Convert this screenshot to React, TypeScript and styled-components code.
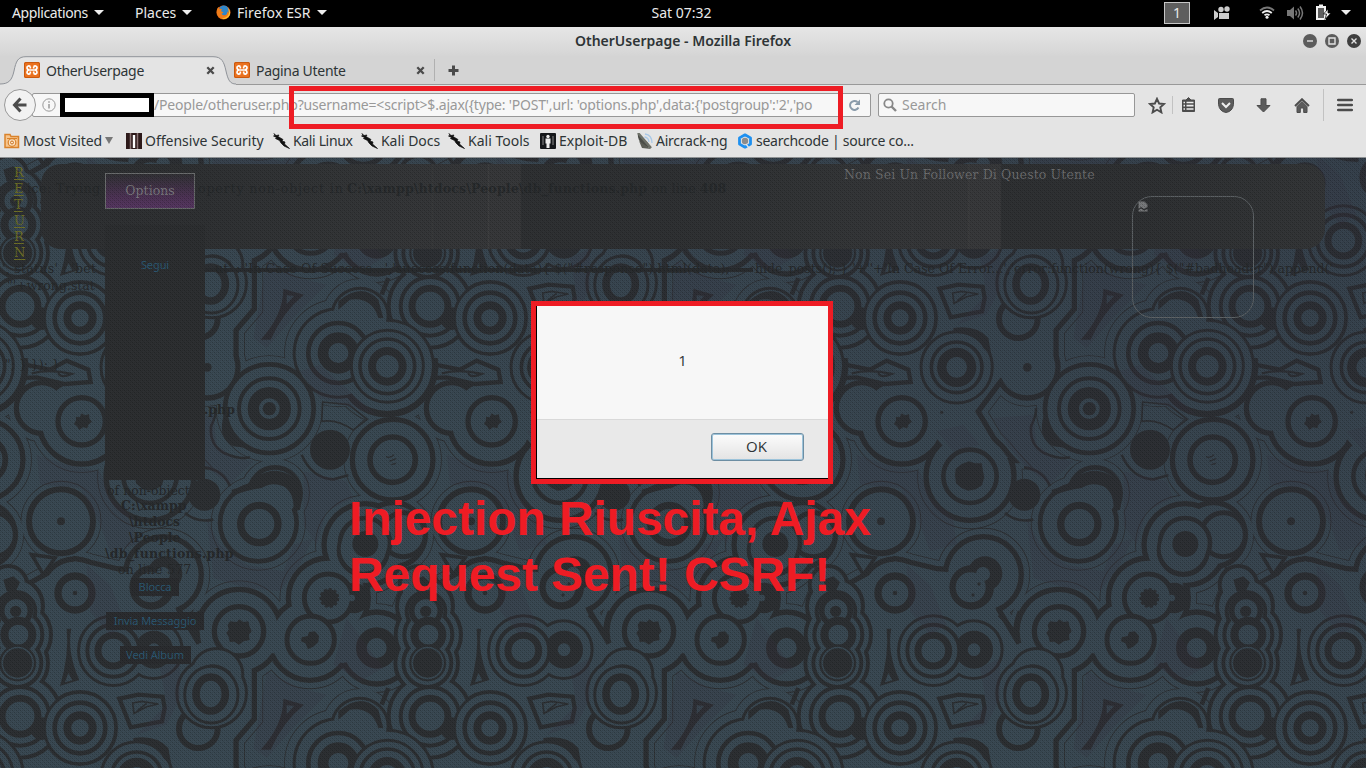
import React from "react";
import styled, { createGlobalStyle } from "styled-components";

const ui = `"Noto Sans", "Open Sans", sans-serif`;
const slab = `"DejaVu Serif", "Liberation Serif", serif`;
const RED = "#ee1c24";
const BLUE = "#3a4953";
const DARK = "#2d3033";

const Global = createGlobalStyle`
  * { box-sizing: border-box; }
  body { margin: 0; background: #2d3338; overflow: hidden; }
  svg { display: block; flex: none; }
`;

const Screen = styled.div`
  position: relative;
  width: 1366px;
  height: 768px;
  overflow: hidden;
  display: flex;
  flex-direction: column;
  font-family: ${ui};
  font-size: 14px;
  color: #2e3436;
`;

const Label = styled.span<{ $ls?: number }>`
  white-space: pre;
  flex: none;
  letter-spacing: ${(p) => p.$ls ?? 0}px;
`;

/* ---------- desktop panel ---------- */
const Panel = styled.div`
  height: 27px;
  background: #000;
  color: #eaeaea;
  display: grid;
  grid-template-columns: 1fr auto 1fr;
  align-items: center;
  padding: 0 15px 2px 12px;
`;
const PanelMenus = styled.div`
  display: flex;
  align-items: center;
`;
const PanelMenu = styled.div<{ $w: number }>`
  display: flex;
  align-items: center;
  width: ${(p) => p.$w}px;
  gap: 6px;
`;
const PanelStatus = styled.div`
  display: flex;
  align-items: center;
  justify-content: flex-end;
`;
const Caret = styled.i`
  border: 5px solid transparent;
  border-top-color: #eee;
  border-bottom: 0;
`;
const Workspace = styled.div`
  width: 26px;
  height: 22px;
  border: 1px solid #c6c6c6;
  background: #5e5e5e;
  display: flex;
  align-items: center;
  justify-content: center;
  margin-right: 24px;
  padding-bottom: 1px;
`;

/* ---------- browser window ---------- */
const TitleBar = styled.div`
  height: 29px;
  background: linear-gradient(#e6e6e6, #d5d5d5);
  display: grid;
  grid-template-columns: 1fr auto 1fr;
  align-items: center;
  padding: 0 5px 1px;
  font-weight: 600;
  > ${Label} { margin-top: -2px; }
`;
const WinButtons = styled.div`
  display: flex;
  justify-content: flex-end;
  gap: 8px;
`;
const TabStrip = styled.div`
  height: 29px;
  background: #d4d4d4;
  position: relative;
  display: flex;
  align-items: center;
  border-bottom: 1px solid #999;
  padding-left: 24px;
`;
const TabShape = styled.svg`
  position: absolute;
  left: 0;
  top: 0;
`;
const Tab = styled.div<{ $w: number; $pad?: number }>`
  position: relative;
  display: flex;
  align-items: center;
  gap: 6px;
  width: ${(p) => p.$w}px;
  padding-left: ${(p) => p.$pad ?? 0}px;
`;
const TabTitle = styled.span`
  flex: 1;
  letter-spacing: -0.3px;
`;
const TabDivider = styled.i`
  width: 1px;
  height: 22px;
  background: #b0b0b0;
  margin: 0 13px 0 9px;
`;
const NavRow = styled.div`
  height: 40px;
  background: #e4e4e4;
  display: flex;
  align-items: center;
  padding-left: 4px;
`;
const Back = styled.div`
  width: 32px;
  height: 32px;
  border-radius: 50%;
  border: 1px solid #999;
  background: #f2f2f2;
  display: flex;
  align-items: center;
  justify-content: center;
  z-index: 1;
`;
const Field = styled.div<{ $w: number; $joined?: boolean }>`
  height: 24px;
  width: ${(p) => p.$w}px;
  margin-left: ${(p) => (p.$joined ? -4 : 7)}px;
  border: 1px solid #979797;
  border-radius: 2px;
  background: #f7f7f7;
  display: flex;
  align-items: center;
  color: #999;
  ${Label} { margin-top: -2px; }
`;
const Redacted = styled.div`
  width: 94px;
  height: 24px;
  border: 5px solid #000;
  background: #fff;
  margin-left: 4px;
  flex: none;
`;
const Reload = styled.div`
  margin-left: auto;
  width: 32px;
  height: 22px;
  border-left: 1px solid #ccc;
  display: flex;
  align-items: center;
  justify-content: center;
`;
const Tools = styled.div`
  display: flex;
  align-items: center;
  flex: 1;
  padding-left: 13px;
`;
const ToolSep = styled.i<{ $h: number; $l: number; $r: number }>`
  width: 1px;
  height: ${(p) => p.$h}px;
  background: #c2c2c2;
  margin: 0 ${(p) => p.$r}px 0 ${(p) => p.$l}px;
`;
const Bookmarks = styled.div`
  height: 33px;
  background: #e4e4e4;
  border-bottom: 1px solid #8e9193;
  display: flex;
  align-items: center;
  padding: 0 0 1px 4px;
`;
const Bookmark = styled.div<{ $w: number }>`
  display: flex;
  align-items: center;
  gap: 3px;
  width: ${(p) => p.$w}px;
`;
const Down = styled.i`
  border: 4px solid transparent;
  border-top: 7px solid #777;
  border-bottom: 0;
`;

/* ---------- page ---------- */
const Page = styled.div`
  position: relative;
  flex: 1;
  overflow: hidden;
  background: ${BLUE};
  font-family: ${slab};
`;
const Layer = styled.svg`
  position: absolute;
  inset: 0;
`;
const Header = styled.div`
  position: absolute;
  left: 41px;
  right: 41px;
  top: 6px;
  height: 85px;
  border-radius: 20px;
  background:
    linear-gradient(90deg, transparent 391px, #3a3b3c 391px, #3a3b3c 392px, transparent 392px, transparent 447px, #404142 447px, #404142 448px, #37383a 448px, #37383a 480px, transparent 480px, transparent 871px, #38393b 871px, #38393b 872px, transparent 872px, transparent 927px, #3e3f40 927px, #38393b 929px, #38393b 960px, transparent 960px),
    repeating-linear-gradient(90deg, #2f3133 0, #2f3133 150px, #343638 340px, #37383a 480px);
`;
const Sidebar = styled.div`
  position: absolute;
  left: 105px;
  top: 67px;
  width: 100px;
  height: 255px;
  background: #2d2f31;
`;
const Trace = styled.div<{ $x: number; $y: number; $ls?: number; $bold?: boolean }>`
  position: absolute;
  left: ${(p) => p.$x}px;
  top: ${(p) => p.$y - 7}px;
  line-height: 16px;
  font-size: 12.5px;
  letter-spacing: ${(p) => p.$ls ?? 0}px;
  font-weight: ${(p) => (p.$bold ? 700 : 400)};
  color: #272a2c;
  white-space: pre;
`;
const Strike = styled.div`
  position: absolute;
  left: 205px;
  top: 110px;
  width: 548px;
  height: 4px;
  background: #2a2d30;
`;
const Return = styled.div`
  position: absolute;
  left: 14px;
  top: 7px;
  width: 12px;
  display: flex;
  flex-direction: column;
  font-size: 13px;
  line-height: 16px;
  color: #6e6f27;
  a { text-decoration: underline; text-underline-offset: 2px; }
`;
const Options = styled.div`
  position: absolute;
  left: 105px;
  top: 15px;
  width: 90px;
  height: 36px;
  border: 1px solid #6a6c6d;
  background: linear-gradient(#323236, #4e3356 70%, #563761);
  color: #79777d;
  font-size: 12.5px;
  display: flex;
  align-items: center;
  justify-content: center;
  padding-bottom: 2px;
`;
const Notice = styled.div`
  position: absolute;
  left: 844px;
  top: 9px;
  line-height: 16px;
  font-size: 12.5px;
  letter-spacing: 0.13px;
  color: #6b6c6e;
  white-space: pre;
`;
const Avatar = styled.div`
  position: absolute;
  left: 1132px;
  top: 38px;
  width: 122px;
  height: 122px;
  border: 1px solid #5e6366;
  border-radius: 20px;
  padding: 4px 5px;
`;
const Links = styled.div`
  position: absolute;
  left: 105px;
  top: 98px;
  width: 100px;
  display: flex;
  flex-direction: column;
  align-items: center;
  font-family: ${ui};
  font-size: 11px;
  letter-spacing: -0.1px;
  color: #2c5973;
`;
const PageLink = styled.span<{ $w: number; $gap: number; $plain?: boolean }>`
  width: ${(p) => p.$w}px;
  height: 18px;
  line-height: 18px;
  margin-bottom: ${(p) => p.$gap}px;
  text-align: center;
  white-space: nowrap;
  background: ${(p) => (p.$plain ? "none" : "#2b2d30")};
`;

/* ---------- overlays ---------- */
const Mark = styled.div`
  position: absolute;
  left: 289px;
  top: 86px;
  width: 554px;
  height: 43px;
  border: 5px solid ${RED};
`;
const Dialog = styled.div`
  position: absolute;
  left: 531px;
  top: 301px;
  width: 302px;
  height: 183px;
  border: 5px solid ${RED};
  background: #000;
  padding: 0 0 1px 1px;
  display: flex;
  flex-direction: column;
  font-family: "Open Sans", sans-serif;
  font-size: 15px;
`;
const DialogBody = styled.div`
  flex: 1;
  background: #f7f7f7;
  display: flex;
  align-items: center;
  justify-content: center;
  padding-bottom: 5px;
`;
const DialogFoot = styled.div`
  height: 59px;
  background: #e9e9e9;
  border-top: 1px solid #d9d9d9;
  display: flex;
  justify-content: flex-end;
  padding: 13px 24px 0 0;
`;
const OkButton = styled.div`
  width: 93px;
  height: 28px;
  border: 1px solid #6d8ea3;
  border-radius: 3px;
  box-shadow: inset 0 0 0 1px #9cc3da;
  background: linear-gradient(#fcfcfc, #e3e3e3);
  display: flex;
  align-items: center;
  justify-content: center;
  padding: 0 2px 2px 0;
`;
const Caption = styled.div`
  position: absolute;
  left: 349px;
  top: 491px;
  font: 700 48px/56px "Liberation Sans", Arial, sans-serif;
  letter-spacing: -0.08px;
  color: ${RED};
  white-space: pre;
`;

/* ---------- icons ---------- */
const Xampp = () => (
  <svg width="16" height="16" viewBox="0 0 16 16">
    <rect width="16" height="16" rx="1.500" fill="#ea711e" />
    <rect x=".5" y=".5" width="15" height="15" rx="1.500" fill="none" stroke="#c9590f" />
    <path d="M6.300 4.500C4.500 3.200 2.800 4.500 3 6 3.200 7.200 4 7.700 5 8 3.800 8.300 3 9 3 10.200 3 11.800 4.800 12.600 6.300 11.500M9.700 4.500C11.500 3.200 13.200 4.500 13 6 12.800 7.200 12 7.700 11 8 12.200 8.300 13 9 13 10.200 13 11.800 11.200 12.600 9.700 11.500M6.300 4.500V6.500M9.700 4.500V6.500M6.300 9.500v2M9.700 9.500v2M5 8h6" fill="none" stroke="#fff" strokeWidth="1.700" />
  </svg>
);
const Close = () => (
  <svg width="9" height="9" viewBox="0 0 9 9"><path d="M1.300 1.300l6.400 6.400M7.700 1.300l-6.400 6.400" stroke="#4b4b4b" strokeWidth="2.300" /></svg>
);
const Firefox = () => (
  <svg width="15" height="15" viewBox="0 0 15 15">
    <circle cx="7.500" cy="7.500" r="7" fill="#e05a0c" />
    <circle cx="7.800" cy="5.600" r="5" fill="#2f86c8" />
    <path d="M.8 6Q1 3 2.500 2L3.500 4Q5 3.500 6 4.500L5 6Q5.500 7 7.500 7 6.500 8.500 5.500 8.500 6.500 11 9 10.500 11.500 9.500 11.500 6.500L13 9Q11 14 7 14 1.500 13 .8 8Z" fill="#ef7d1a" />
    <path d="M11.500 2.500q4 4 2 8-3 4.500-8 3 5.500-.5 7-4 1-3.500-1-7Z" fill="#ffc62b" />
  </svg>
);
const Dragon = () => (
  <svg width="17" height="16" viewBox="0 0 17 16">
    <path d="M1 .5l2 2 3-.5-1 1.500 5 3-1 1.500 3 1-.5 2 5 4.500-5.500-2.500L8 10 6.500 7.500 2.500 5.500l1-1L.5 3l1.500-.5Z" fill="#111" stroke="#111" strokeWidth=".7" />
  </svg>
);
const WinBtn = ({ d, c = "#5c5c5c" }: { d: string; c?: string }) => (
  <svg width="14" height="14" viewBox="0 0 14 14">
    <circle cx="7" cy="7" r="7" fill={c} />
    <path d={d} fill="none" stroke="#e2e2e2" strokeWidth="1.400" />
  </svg>
);

/* ---------- ornamental wallpaper tile ---------- */
type C = [number, number, number];
const T = 1230;
const neighbours = [[0, 0], [-T, 0], [T, 0], [0, -T], [0, T], [-T, -T]];
/* Repeats one step of the drawing at every neighbouring tile, so that edges join. */
const Wrap = ({ id, ...rest }: { id: string } & React.SVGProps<SVGUseElement>) => (
  <>{neighbours.map(([x, y], i) => <use key={i} href={"#" + id} x={x} y={y} {...rest} />)}</>
);
const Circles = ({ list }: { list: C[] }) => (
  <>{list.map(([x, y, r], i) => <circle key={i} cx={x} cy={y} r={r} />)}</>
);
const Ring = ({ c: [x, y, r], w, fill = "none" }: { c: C; w: number; fill?: string }) => (
  <circle cx={x} cy={y} r={r} fill={fill} stroke={DARK} strokeWidth={w} />
);
const Dot = ({ c: [x, y, r], light }: { c: C; light?: boolean }) => (
  <circle cx={x} cy={y} r={r} fill={light ? BLUE : DARK} stroke="none" />
);
/* Closed contour around overlapping shapes: dark pass below, light pass above. */
const Contour = ({ id, w }: { id: string; w: number }) => (
  <>
    <Wrap id={id} fill={DARK} stroke={DARK} strokeWidth={w * 2} />
    <Wrap id={id} fill={BLUE} stroke="none" />
  </>
);
const outlined = ["land", "seven", "west", "arcs", "bull", "disc"];
const shapes: Record<string, React.ReactNode> = {
  land: (
    <>
      <Circles list={[[125, 150, 68], [245, 190, 120], [450, 355, 124], [622, 28, 84]]} />
      <path d="M255 75L60 30 60 -60 300 -120 700 -120 700 0 540 60 465 160 515 245 565 300 400 300 340 230 250 150Z" />
      <Circles list={[[225, 705, 94], [490, 650, 106], [717, 820, 118], [930, 845, 114], [985, 720, 112], [1095, 560, 115], [1180, 530, 88], [1130, 870, 100], [635, 1005, 120]]} />
      <path d="M60 700L225 610 350 640 490 650 530 760 590 860 720 800 1120 800 1230 800 1230 700 1160 880 1030 915 815 885 755 930 755 1080 660 1190 690 1260 560 1260 0 1260 0 650 80 690Z" />
    </>
  ),
  seven: <Circles list={[[775, 495, 108], [825, 405, 70]]} />,
  bull: <Circles list={[[808, 152, 126]]} />,
  disc: <Circles list={[[1178, 305, 113], [1162, 25, 140], [1015, -15, 110]]} />,
  pair: <Circles list={[[340, 878, 100], [460, 875, 82]]} />,
  column: <Circles list={[[25, 680, 50], [45, 745, 78], [55, 830, 92], [50, 915, 88], [60, 1075, 118], [240, 1110, 102]]} />,
  columnInner: <Circles list={[[48, 760, 52], [55, 830, 66], [52, 915, 66], [60, 1075, 82]]} />,
  arcs: <Circles list={[[1015, 1215, 128], [1162, 1255, 134], [1080, 1105, 80]]} />,
  west: <Circles list={[[183, 490, 87]]} />,
  kidney: <Circles list={[[635, 1005, 100], [650, 950, 74]]} />,
};

const layerA = (
  <g id="layer-a">
    <path d="M75 20L150 35 200 8 265 35 272 72 195 78 110 58 70 60Z" fill={BLUE} stroke={DARK} strokeWidth="13" />
    <path d="M95 46Q150 32 215 48 180 62 175 45" fill="none" stroke={DARK} strokeWidth="7" />
    <Dot c={[365, 163, 5]} />
    <path d="M95 590L165 600 130 650Z" fill={BLUE} stroke={DARK} strokeWidth="11" />
    <Ring c={[410, 28, 107]} w={9} fill={BLUE} />
    <Ring c={[410, 28, 76]} w={11} />
    <Ring c={[410, 28, 45]} w={28} />
    <Dot c={[622, 28, 13]} />
    <Ring c={[245, 190, 71]} w={16} />
    <path d="M245 166l9 6 13-3 2 14 7 8-11 9-3 11-13-3-11 8-7-11-9-7 6-11 0-11 11 2Z" fill={DARK} />
    <Ring c={[450, 355, 80]} w={14} />
    <path d="M425 318l22-8 18 6 20 0 4 22 4 20-7 24-18 12-24 4-20-8-16-14-3-24 2-20Z" fill={DARK} />
    <path d="M612 328Q670 335 690 385M555 465Q590 495 640 485" fill="none" stroke={DARK} strokeWidth="8" />
    <Dot c={[613, 410, 48]} />
    <path d="M648 150Q650 170 633 205 628 260 672 285 720 306 750 298" fill="none" stroke={DARK} strokeWidth="8" />
    <path d="M672 170Q650 240 700 265L780 275Z" fill={DARK} />
    <path d="M968 132L1045 140 1102 184 1060 216Q1010 182 965 190Z" fill="none" stroke={DARK} strokeWidth="5" />
    <path d="M905 290Q935 360 1000 364L1045 352" fill="none" stroke={DARK} strokeWidth="8" />
    <Dot c={[990, 275, 60]} />
  </g>
);
const layerB = (
  <g id="layer-b">
    <Ring c={[808, 152, 91]} w={12} />
    <Ring c={[808, 152, 48]} w={34} />
    <Dot c={[808, 152, 20]} />
    <Ring c={[1178, 305, 121]} w={16} fill={BLUE} />
    <Ring c={[1178, 305, 68]} w={17} />
    <path d="M1158 296q14 6 24-6M1168 310l20-8M1174 320l14-4" fill="none" stroke={DARK} strokeWidth="4" />
    <path d="M695 395Q745 385 770 355 830 320 880 358 915 400 900 455L880 462Q885 405 850 385 815 370 785 390 740 395 695 415Z" fill={DARK} />
    <Ring c={[778, 498, 56]} w={22} />
    <Dot c={[183, 490, 12]} />

    <Ring c={[225, 705, 51]} w={22} />
    <Dot c={[225, 705, 7]} />
    <Dot c={[495, 647, 52]} />
    <Dot c={[455, 688, 67]} />
    <Dot c={[452, 688, 45]} light />
    <Dot c={[489, 648, 21]} light />
    <Dot c={[477, 678, 5]} />
    <Dot c={[459, 711, 5]} />
    <path d="M538 770Q570 800 586 832Q585 795 600 760" fill="none" stroke={DARK} strokeWidth="14" />

    <Ring c={[717, 820, 74]} w={16} />
    <path d="M690 790l20 2 8-8 12 8 15-2 4 16 6 14-8 10 2 16-18 4-14 10-14-9-14 1-3-15-7-12 7-10-3-14Z" fill={DARK} />
    <Dot c={[1062, 720, 46]} />
    <Ring c={[985, 720, 72]} w={15} fill={BLUE} />
    <circle cx="988" cy="720" r="26" fill={DARK} stroke={DARK} strokeWidth="8" strokeDasharray="9 6" />
    <Dot c={[1055, 720, 10]} light />
    <Ring c={[932, 845, 71]} w={15} fill={BLUE} />
    <path d="M905 838l18-4 4-12 18-2 12 14-2 18-15 14-16 8-8-18-13-6Z" fill={DARK} />
    <Ring c={[1130, 870, 46]} w={32} />
    <Ring c={[1210, 530, 66]} w={15} fill={BLUE} />
    <Ring c={[1090, 577, 72]} w={16} fill={BLUE} />
    <Ring c={[1095, 555, 75]} w={14} fill={BLUE} />
    <Dot c={[1090, 572, 68]} light />
    <Dot c={[1096, 558, 39]} />
  </g>
);
const layerC = (
  <g id="layer-c">
    <path d="M10 665l30-10 20 18-15 32-25-5Z" fill={DARK} />
    <Ring c={[48, 758, 43]} w={17} fill={BLUE} />
    <Dot c={[47, 760, 17]} />
    <Ring c={[55, 830, 42]} w={24} fill={BLUE} />
    <Ring c={[53, 915, 52]} w={7} fill={BLUE} />
    <Dot c={[53, 915, 44]} />
    <Dot c={[125, 1112, 34]} />
    <Ring c={[60, 1075, 54]} w={21} fill={BLUE} />
    <Ring c={[240, 1110, 107]} w={9} fill={BLUE} />
    <Ring c={[240, 1110, 76]} w={14} />
    <Ring c={[240, 1110, 38]} w={24} />
  </g>
);
const layerD = (
  <g id="layer-d">
    <Ring c={[462, 875, 38]} w={38} />
    <Ring c={[340, 878, 78]} w={12} fill={BLUE} />
    <Ring c={[340, 878, 46]} w={21} />
    <path d="M200 812h14Q200 880 238 966L180 984Q208 890 200 812Z" fill={DARK} />
    <path d="M205 945l12 22-22 6Z" fill={BLUE} />
    <path d="M358 1022L415 1010 488 1016 494 1050 486 1090 392 1108Z" fill={BLUE} stroke={DARK} strokeWidth="13" />
    <path d="M398 1035L425 1030 475 1038 440 1046 402 1066ZM412 1058L440 1036" fill="none" stroke={DARK} strokeWidth="5" />
    <Ring c={[595, 1112, 58]} w={18} fill={BLUE} />
  </g>
);
const layerE = (
  <g id="layer-e">
    <path d="M600 935Q640 900 690 940L710 975 630 950Z" fill={DARK} />
    <ellipse cx="634" cy="1010" rx="80" ry="85" fill={BLUE} stroke={DARK} strokeWidth="9" />
    <ellipse cx="632" cy="1008" rx="44" ry="51" fill="none" stroke={DARK} strokeWidth="23" />
    <path d="M400 1140Q470 1130 505 1170L515 1225 490 1200Q470 1160 400 1150Z" fill={DARK} />
    <path d="M850 1022L912 1040Q850 1090 812 1175H782Q850 1100 850 1022Z" fill={DARK} />
    <path d="M860 1042l22 2-22 24Z" fill={BLUE} />
    <path d="M1165 990L1145 1040" stroke={DARK} strokeWidth="14" />
  </g>
);
const layerF = (
  <g id="layer-f">
    <path d="M1015 1060Q1085 1000 1135 1055L1150 1110H1135Q1115 1045 1050 1055L1015 1085Z" fill={DARK} />
    <Ring c={[1015, 1215, 90]} w={14} fill={BLUE} />
    <Ring c={[1015, 1215, 46]} w={32} />
    <Ring c={[1162, 1255, 108]} w={9} fill={BLUE} />
    <Ring c={[1162, 1255, 82]} w={11} />
    <Ring c={[1162, 1255, 46]} w={24} />
  </g>
);

/* Faint plum mottling over the blue. */
const layerG = (
  <g id="layer-g" fill="#33303c" opacity=".22">
    <path d="M110 290L200 320 300 340 330 420 400 480 410 560 330 580 300 500 240 390 120 380Z" />
    <path d="M520 180L640 170 650 260 700 300 760 310 690 380 620 330 560 260Z" />
    <path d="M620 480L660 560 740 620 850 640 880 560 940 540 900 620 840 700 740 690 640 660Z" />
    <path d="M910 340L1040 370 1060 420 980 460 950 560 910 500Z" />
    <path d="M260 620L330 680 380 800 330 830 270 760Z" />
    <path d="M480 930L540 900 540 1020 500 1100 410 1130 500 1040Z" />
    <path d="M800 940L900 990 980 1010 880 1110 800 1200 760 1170Z" />
    <path d="M1040 780L1150 930 1080 970 1000 920Z" />
    <path d="M350 220L430 200 480 260 400 280Z" />
    <path d="M960 20L1060 110 1130 170 960 120 900 40Z" />
  </g>
);

const Wallpaper = () => (
  <Layer width="1366" height="610">
    <defs>
      {Object.entries(shapes).map(([k, v]) => <g id={k} key={k}>{v}</g>)}
      {layerA}{layerB}{layerC}{layerD}{layerE}{layerF}{layerG}
      <pattern id="tile" width="410" height="410" y="200" patternUnits="userSpaceOnUse">
        <rect width="410" height="410" fill={BLUE} />
        <g transform="scale(.33333)">
          {outlined.map((k) => <Wrap key={k} id={k} fill={DARK} stroke={DARK} strokeWidth={69} />)}
          {outlined.map((k) => <Wrap key={k} id={k} fill={BLUE} stroke={BLUE} strokeWidth={64} />)}
          <Contour id="land" w={16} />
          <Wrap id="layer-a" />
          <Contour id="west" w={18} />
          <Contour id="disc" w={13} />
          <Contour id="bull" w={14} />
          <Contour id="seven" w={14} />
          <Wrap id="layer-b" />
          <Contour id="column" w={12} />
          <Contour id="columnInner" w={12} />
          <Wrap id="layer-c" />
          <Contour id="pair" w={9} />
          <Wrap id="layer-d" />
          <Contour id="kidney" w={9} />
          <Wrap id="layer-e" />
          <Contour id="arcs" w={9} />
          <Wrap id="layer-f" />
          <Wrap id="layer-g" />
        </g>
      </pattern>
      <pattern id="weave" width="4" height="4" patternUnits="userSpaceOnUse">
        <path d="M0 0h1v1h-1zM2 2h1v1h-1z" fill="#000" opacity=".24" />
        <path d="M2 0h1v1h-1zM0 2h1v1h-1z" fill="#000" opacity=".12" />
        <path d="M1 1h1v1h-1zM3 3h1v1h-1z" fill="#000" opacity=".1" />
      </pattern>
      <linearGradient id="shade" x1="0" y1="1" x2="1" y2="0">
        <stop offset=".4" stopColor="#2c2c3a" stopOpacity="0" />
        <stop offset="1" stopColor="#2c2c3a" stopOpacity=".28" />
      </linearGradient>
    </defs>
    <rect width="1366" height="610" fill="url(#tile)" />
    <rect width="1366" height="610" fill="url(#shade)" />
  </Layer>
);
const Weave = () => (
  <Layer width="1366" height="610"><rect width="1366" height="610" fill="url(#weave)" /></Layer>
);

export default function App() {
  return (
    <Screen>
      <Global />
      <Panel>
        <PanelMenus>
          <PanelMenu $w={123}><Label $ls={-0.38}>Applications</Label><Caret /></PanelMenu>
          <PanelMenu $w={81}><Label>Places</Label><Caret /></PanelMenu>
          <PanelMenu $w={120}><Firefox /><Label $ls={0.1}>Firefox ESR</Label><Caret /></PanelMenu>
        </PanelMenus>
        <Label>Sat 07:32</Label>
        <PanelStatus>
          <Workspace>1</Workspace>
          <svg width="17" height="14" viewBox="0 0 17 14" style={{ marginRight: 28 }}>
            <path d="M0 4l4 3v4l-4 3zM5 7h10v6h-10z" fill="#ccc" />
            <circle cx="7" cy="3.500" r="2.700" fill="#ccc" /><circle cx="13" cy="3" r="2.700" fill="#ccc" />
          </svg>
          <svg width="16" height="13" viewBox="0 0 16 13" style={{ marginRight: 12 }}>
            <path d="M1 4.500Q8-1.500 15 4.500" fill="none" stroke="#777" strokeWidth="1.800" />
            <path d="M3.200 7Q8 3 12.800 7M5.500 9.300Q8 7.500 10.500 9.300" fill="none" stroke="#eee" strokeWidth="1.800" />
            <circle cx="8" cy="11.300" r="1.500" fill="#eee" />
          </svg>
          <svg width="17" height="16" viewBox="0 0 17 16" style={{ marginRight: 11 }}>
            <path d="M0 5h3l4-3.500v13L3 11H0z" fill="#777" />
            <path d="M8.500 5.500q2 2.500 0 5M10.800 3.500q3.500 4.500 0 9M13 1.500q5 6.500 0 13" fill="none" stroke="#777" strokeWidth="1.500" />
          </svg>
          <svg width="17" height="17" viewBox="0 0 17 17" style={{ marginRight: 9 }}>
            <path d="M1 2h3V.500h4V2h3v14H1z" fill="#f2f2f2" /><path d="M3 4h6v10H3z" fill="#5e5e5e" />
            <path d="M13 5l-4.500 5h3l-1.500 5.500 6-6.500h-3z" fill="#f2f2f2" stroke="#000" strokeWidth=".7" />
          </svg>
          <Caret />
        </PanelStatus>
      </Panel>

      <TitleBar>
        <span />
        <Label>OtherUserpage - Mozilla Firefox</Label>
        <WinButtons>
          <WinBtn d="M4 7h6" />
          <WinBtn d="M4 4h6v6h-6z" />
          <WinBtn d="M4.500 4.500l5 5M9.500 4.500l-5 5" c="#3f3f3f" />
        </WinButtons>
      </TitleBar>

      <TabStrip>
        <TabShape width="236" height="29" viewBox="0 0 236 29">
          <path d="M0 28C9 28 12 24 14 15 16 5 18 .7 26 .7H213C222 .7 224 6 226 15 228 24 230 28 236 28V29H0Z" fill="#e4e4e4" />
          <path d="M0 28C9 28 12 24 14 15 16 5 18 .7 26 .7H213C222 .7 224 6 226 15 228 24 230 28 236 28" fill="none" stroke="#8f9399" />
        </TabShape>
        <Tab $w={191}><Xampp /><TabTitle>OtherUserpage</TabTitle><Close /></Tab>
        <Tab $w={210} $pad={19}><Xampp /><TabTitle>Pagina Utente</TabTitle><Close /></Tab>
        <TabDivider />
        <svg width="11" height="11" viewBox="0 0 11 11"><path d="M5.500 .5v10M.5 5.500h10" stroke="#4a4a4a" strokeWidth="3" /></svg>
      </TabStrip>

      <NavRow>
        <Back>
          <svg width="16" height="16" viewBox="0 0 16 16"><path d="M8.500 1.500L2.500 8l6 6.500M3 8h11.500" fill="none" stroke="#4c4c4c" strokeWidth="3" /></svg>
        </Back>
        <Field $w={839} $joined>
          <svg width="14" height="14" viewBox="0 0 14 14" style={{ marginLeft: 9 }}>
            <circle cx="7" cy="7" r="6.200" fill="none" stroke="#999" /><path d="M7 6v4.500M7 3.300v1.500" stroke="#999" strokeWidth="1.500" />
          </svg>
          <Redacted />
          <Label $ls={-0.19}>{"/People/otheruser.php?username=<script>$.ajax({type: 'POST',url: 'options.php',data:{'postgroup':'2','po"}</Label>
          <Reload>
            <svg width="13" height="13" viewBox="0 0 13 13"><path d="M10.500 8.500A4.500 4.500 0 1 1 9.500 3" fill="none" stroke="#8a9baa" strokeWidth="2" /><path d="M12 .5v5.500H6.500z" fill="#8a9baa" /></svg>
          </Reload>
        </Field>
        <Field $w={257}>
          <svg width="14" height="14" viewBox="0 0 14 14" style={{ margin: "0 5px 0 4px" }}>
            <circle cx="5.500" cy="5.500" r="4.200" fill="none" stroke="#888" strokeWidth="1.800" /><path d="M8.500 8.500l4.500 4.500" stroke="#888" strokeWidth="2.400" />
          </svg>
          <Label>Search</Label>
        </Field>
        <Tools>
          <svg width="18" height="17" viewBox="0 0 18 17"><path d="M9 1.800l2.100 4.700 5 .5-3.800 3.400 1.100 5L9 12.800l-4.400 2.600 1.100-5L1.900 7l5-.5z" fill="none" stroke="#4c4c4c" strokeWidth="1.900" /></svg>
          <ToolSep $h={18} $l={6} $r={8} />
          <svg width="15" height="16" viewBox="0 0 15 16"><path d="M5 3l2.500-2.500L10 3h3.500v11.500h-12V3z" fill="#4c4c4c" stroke="#4c4c4c" strokeLinejoin="round" /><path d="M2.500 5.500h1.500M5.500 5.500h7M2.500 8.700h1.500M5.500 8.700h7M2.500 12h1.500M5.500 12h7" stroke="#eee" strokeWidth="1.700" /></svg>
          <svg width="16" height="15" viewBox="0 0 16 15" style={{ marginLeft: 22 }}><path d="M1.500.5h13q1 0 1 1v5q-1 7-7.500 8Q1.500 13.500.5 6.500v-5q0-1 1-1z" fill="#5c5c5c" stroke="#4c4c4c" /><path d="M4 5l4 4 4-4" fill="none" stroke="#eee" strokeWidth="2" /></svg>
          <svg width="15" height="15" viewBox="0 0 15 15" style={{ marginLeft: 22 }}><path d="M5 .8h5V7.500h4L7.500 14 1 7.500h4z" fill="#5c5c5c" stroke="#4c4c4c" /></svg>
          <svg width="16" height="15" viewBox="0 0 16 15" style={{ marginLeft: 23 }}><path d="M1 8l7-6.800L15 8" fill="none" stroke="#4c4c4c" strokeWidth="1.900" /><path d="M3 8.500l5-5 5 5v6H9.700V10H6.300v4.500H3z" fill="#5c5c5c" stroke="#4c4c4c" /></svg>
          <ToolSep $h={32} $l={13} $r={13} />
          <svg width="16" height="14" viewBox="0 0 16 14"><path d="M1.200 2h13.600M1.200 7h13.600M1.200 12h13.600" stroke="#4c4c4c" strokeWidth="2.600" strokeLinecap="round" /></svg>
        </Tools>
      </NavRow>

      <Bookmarks>
        <Bookmark $w={122}>
          <svg width="16" height="16" viewBox="0 0 16 16"><path d="M1 14.500V1.500h5l1 2h7.500v11z" fill="#f6c58e" stroke="#d9822b" strokeWidth="1.500" /><circle cx="8" cy="9.500" r="3.800" fill="#fbe3c4" stroke="#d9822b" strokeWidth="1.200" /><path d="M3 5.500h10" stroke="#d9822b" /><circle cx="8" cy="9.500" r="1.500" fill="none" stroke="#c87020" /></svg>
          <Label $ls={-0.13}>Most Visited</Label><Down />
        </Bookmark>
        <Bookmark $w={147}>
          <svg width="16" height="16" viewBox="0 0 16 16"><path d="M0 0h16v16H0z" fill="#2d1a1a" /><path d="M4.500 0v16M11.500 0v16" stroke="#8a7474" strokeWidth="1.500" /><path d="M8 2v13" stroke="#fff" strokeWidth="2.400" /></svg>
          <Label>Offensive Security</Label>
        </Bookmark>
        <Bookmark $w={88}><Dragon /><Label $ls={-0.35}>Kali Linux</Label></Bookmark>
        <Bookmark $w={87}><Dragon /><Label $ls={-0.05}>Kali Docs</Label></Bookmark>
        <Bookmark $w={92}><Dragon /><Label>Kali Tools</Label></Bookmark>
        <Bookmark $w={97}>
          <svg width="16" height="16" viewBox="0 0 16 16"><rect width="16" height="16" rx="1" fill="#15171a" /><circle cx="8" cy="3.500" r="1.700" fill="#eee" /><path d="M5.500 5.500h5v5h-1V15H6.500v-4.500h-1z" fill="#eee" /><path d="M3 3v9M13 3v9" stroke="#aaa" strokeWidth=".8" /></svg>
          <Label>Exploit-DB</Label>
        </Bookmark>
        <Bookmark $w={100}>
          <svg width="16" height="16" viewBox="0 0 16 16"><path d="M1 0C0 5 3 13 14 15L11 10Z" fill="#4b4d48" /><path d="M1 0L14 15" stroke="#6d7068" strokeWidth="2.500" /><path d="M2 8l3 7 9 1z" fill="#5b5d56" /><path d="M8 1q7 1 7 9M7.500 4q4 .5 4.500 5" fill="none" stroke="#a9c8e6" strokeWidth="1.300" /></svg>
          <Label $ls={-0.25}>Aircrack-ng</Label>
        </Bookmark>
        <Bookmark $w={190}>
          <svg width="16" height="16" viewBox="0 0 16 16"><path d="M8 1.800l5.500 3.100v6.200L8 14.200l-5.500-3.100V4.900z" fill="none" stroke="#1e90f0" strokeWidth="2.800" strokeLinejoin="round" /><circle cx="8" cy="8" r="3.200" fill="#8c8c8c" /><path d="M9 11l3 4" stroke="#e4e4e4" strokeWidth="1.300" /></svg>
          <Label $ls={-0.25}>searchcode | source co...</Label>
        </Bookmark>
      </Bookmarks>

      <Page>
        <Wallpaper />
        <Header />
        <Strike />
        <Trace $x={27} $y={30} $ls={0.5}>ice: Trying</Trace>
        <Trace $x={198} $y={30} $ls={0.9}>{"operty non-object in "}</Trace>
        <Trace $x={347} $y={30} $ls={0.18}><b>{"C:\\xampp\\htdocs\\People\\db_functions.php"}</b>{" on line "}<b>408</b></Trace>
        <Trace $x={2} $y={110} $ls={0.3}>{"', status' : 'bet"}</Trace>
        <Trace $x={215} $y={110} $ls={0.15}>{"ut' : 'In Case Of Success...','success:function(data){ $(\"#response\").html(data);"}</Trace>
        <Trace $x={755} $y={110} $ls={0.02}>{"hide_posts(); } '+''+'In Case Of Error...','error:function(wrong){ $(\"#badheader\").append('"}</Trace>
        <Trace $x={7} $y={127}>{"\"'+wrong.stat"}</Trace>
        <Trace $x={5} $y={206}>{"\"; } }); }"}</Trace>
        <Trace $x={204} $y={251} $bold>.php</Trace>
        <Trace $x={107} $y={332}>of non-object</Trace>
        <Trace $x={121} $y={347} $bold>{"C:\\xampp"}</Trace>
        <Trace $x={129} $y={363} $bold>{"\\htdocs"}</Trace>
        <Trace $x={129} $y={379} $bold>{"\\People"}</Trace>
        <Trace $x={105} $y={395} $bold $ls={0.2}>{"\\db_functions.php"}</Trace>
        <Trace $x={118} $y={411} $ls={0.25}>on line 577</Trace>
        <Sidebar />
        <Return>{"RETURN".split("").map((c, i) => <a key={i}>{c}</a>)}</Return>
        <Options>Options</Options>
        <Notice>Non Sei Un Follower Di Questo Utente</Notice>
        <Avatar>
          <svg width="10" height="11" viewBox="0 0 10 11"><path d="M.5.500h6l3 3V6L6 8 3 6 .5 8z" fill="#77797b" /><path d="M.5 10.500V9L3 7.500 6 9.500 9.500 8v2.500z" fill="#77797b" /></svg>
        </Avatar>
        <Links>
          <PageLink $w={60} $gap={304} $plain>Segui</PageLink>
          <PageLink $w={48} $gap={16}>Blocca</PageLink>
          <PageLink $w={98} $gap={16}>Invia Messaggio</PageLink>
          <PageLink $w={71} $gap={0}>Vedi Album</PageLink>
        </Links>
        <Weave />
      </Page>

      <Mark />
      <Dialog>
        <DialogBody>1</DialogBody>
        <DialogFoot><OkButton>OK</OkButton></DialogFoot>
      </Dialog>
      <Caption>{"Injection Riuscita, Ajax\nRequest Sent! CSRF!"}</Caption>
    </Screen>
  );
}
